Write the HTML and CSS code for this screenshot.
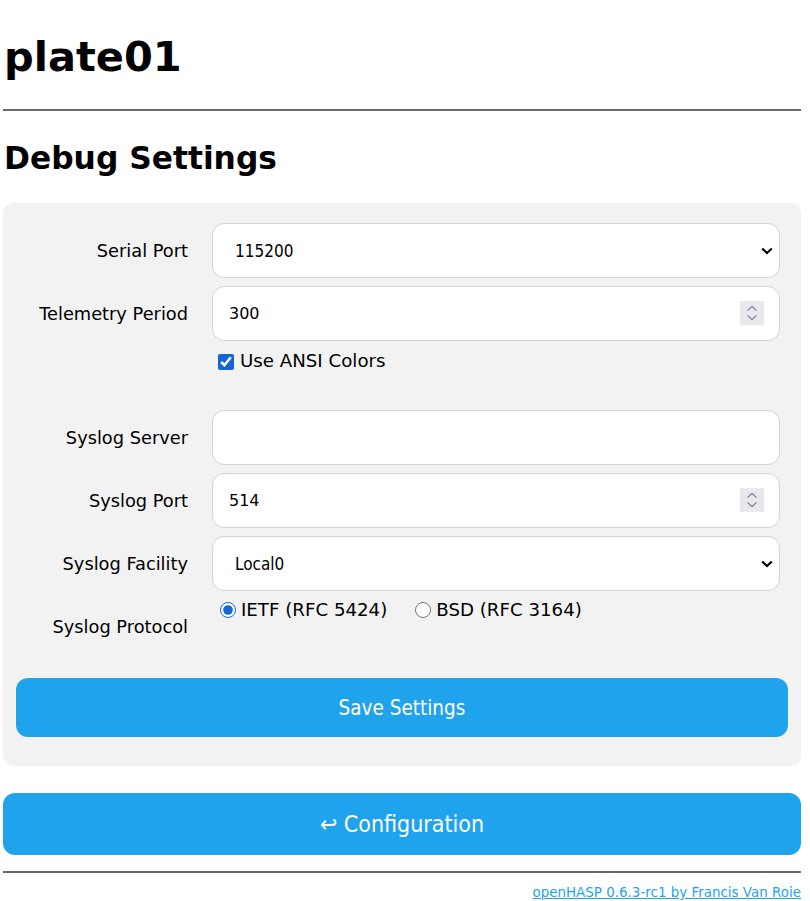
FILE: index.html
```html
<!DOCTYPE html>
<html>
<head>
<meta charset="utf-8">
<title>plate01</title>
<link rel="stylesheet" href="styles.css">
</head>
<body>
<div class="page">
  <h1 class="title">plate01</h1>
  <hr class="rule">
  <h2 class="subtitle">Debug Settings</h2>
  <form class="panel">
    <div class="row">
      <label class="lbl" for="baud">Serial Port</label>
      <div class="wrap">
        <select id="baud" class="field sel">
          <option>115200</option>
        </select>
        <svg class="chev" width="12" height="8" viewBox="0 0 12 8"><path d="M1.2 1.5 L6 6 L10.8 1.5" fill="none" stroke="#000" stroke-width="2.2"/></svg>
      </div>
    </div>
    <div class="row">
      <label class="lbl" for="tele">Telemetry Period</label>
      <div class="wrap">
        <input id="tele" class="field num" type="number" value="300">
        <span class="spin"><svg width="24" height="24" viewBox="0 0 24 24"><path d="M7.5 9.5 L12 5.5 L16.5 9.5 M7.5 14.5 L12 18.5 L16.5 14.5" fill="none" stroke="#8b8b99" stroke-width="1.4"/></svg></span>
      </div>
    </div>
    <div class="row row-check">
      <span class="lbl"></span>
      <label class="opt"><input class="chk" type="checkbox" checked>Use ANSI Colors</label>
    </div>
    <div class="row">
      <label class="lbl" for="srv">Syslog Server</label>
      <div class="wrap">
        <input id="srv" class="field" type="text" value="">
      </div>
    </div>
    <div class="row">
      <label class="lbl" for="port">Syslog Port</label>
      <div class="wrap">
        <input id="port" class="field num" type="number" value="514">
        <span class="spin"><svg width="24" height="24" viewBox="0 0 24 24"><path d="M7.5 9.5 L12 5.5 L16.5 9.5 M7.5 14.5 L12 18.5 L16.5 14.5" fill="none" stroke="#8b8b99" stroke-width="1.4"/></svg></span>
      </div>
    </div>
    <div class="row">
      <label class="lbl" for="fac">Syslog Facility</label>
      <div class="wrap">
        <select id="fac" class="field sel">
          <option>Local0</option>
        </select>
        <svg class="chev" width="12" height="8" viewBox="0 0 12 8"><path d="M1.2 1.5 L6 6 L10.8 1.5" fill="none" stroke="#000" stroke-width="2.2"/></svg>
      </div>
    </div>
    <div class="row row-radio">
      <span class="lbl">Syslog Protocol</span>
      <div class="radios">
        <label class="opt"><input class="rad" type="radio" name="proto" checked>IETF (RFC 5424)</label>
        <label class="opt"><input class="rad" type="radio" name="proto">BSD (RFC 3164)</label>
      </div>
    </div>
    <button type="button" class="btn btn-save">Save Settings</button>
  </form>
  <button type="button" class="btn btn-config">&#8617; Configuration</button>
  <hr class="rule rule-bottom">
  <div class="footer"><a href="#">openHASP 0.6.3-rc1 by Francis Van Roie</a></div>
</div>
</body>
</html>
```

FILE: styles.css
```css
html, body {
  margin: 0;
  padding: 0;
  background: #fff;
}
body {
  font-family: "DejaVu Sans", Verdana, sans-serif;
  color: #000;
}
.page {
  margin: 0 9px 0 3px;
}
.title {
  font-size: 41.5px;
  font-weight: bold;
  margin: 32px 0 0 1px;
  line-height: 49px;
}
.rule {
  border: 0;
  height: 2px;
  background: #6b6b6b;
  margin: 28px 0 0 0;
}
.subtitle {
  font-size: 31.3px;
  font-weight: bold;
  margin: 29px 0 0 1px;
  line-height: 37px;
}
.panel {
  margin-top: 26px;
  background: #f2f2f2;
  border-radius: 10px;
  padding: 20px 13px 29px 13px;
  display: flex;
  flex-direction: column;
  gap: 8px;
}
.row {
  display: grid;
  grid-template-columns: 172px 1fr;
  column-gap: 24px;
  align-items: center;
  margin-right: 8px;
  height: 55px;
}
.lbl {
  text-align: right;
  font-size: 17.8px;
}
.wrap {
  position: relative;
  height: 55px;
}
.field {
  box-sizing: border-box;
  display: block;
  height: 55px;
  width: 100%;
  margin: 0;
  border: 1px solid #d4d4d4;
  border-radius: 12px;
  background: #fff;
  padding: 0 16px;
  font-family: "DejaVu Sans", sans-serif;
  font-size: 16px;
  color: #000;
  outline: none;
}
.num {
  -moz-appearance: textfield;
}
.num::-webkit-inner-spin-button,
.num::-webkit-outer-spin-button {
  -webkit-appearance: none;
  margin: 0;
}
.sel {
  -webkit-appearance: none;
  appearance: none;
  font-family: "DejaVu Sans Condensed", "DejaVu Sans", sans-serif;
  font-stretch: condensed;
  font-size: 17px;
  padding-left: 22px;
}
.chev {
  position: absolute;
  right: 7px;
  top: 24px;
  pointer-events: none;
}
.spin {
  position: absolute;
  right: 16px;
  top: 15px;
  width: 24px;
  height: 24px;
  background: #e9e9ed;
  pointer-events: none;
}
.spin svg {
  display: block;
}
.row-check {
  height: 53px;
  align-items: start;
}
.row-radio {
  align-items: center;
}
.row-radio .radios {
  align-self: start;
  display: flex;
  gap: 28px;
}
.opt {
  display: inline-flex;
  align-items: center;
  font-size: 18.2px;
  padding-top: 1px;
  accent-color: #1565d8;
}
.radios .opt {
  padding-top: 0;
}
.chk {
  width: 16px;
  height: 16px;
  margin: 2px 6px 0 6px;
}
.rad {
  width: 16px;
  height: 16px;
  margin: 1px 5px 0 8px;
}
.radios .opt + .opt .rad {
  margin-left: 0;
}
.btn {
  display: block;
  width: 100%;
  border: 0;
  background: #1fa3ec;
  color: #fff;
  font-family: "DejaVu Sans Condensed", "DejaVu Sans", sans-serif;
  font-stretch: condensed;
  font-size: 20.5px;
  cursor: pointer;
}
.btn-save {
  margin-top: 16px;
  height: 59px;
  border-radius: 12px;
}
.btn-config {
  margin-top: 27px;
  height: 62px;
  border-radius: 12px;
  font-size: 23px;
}
.rule-bottom {
  margin-top: 16px;
}
.footer {
  text-align: right;
  font-size: 13.45px;
  margin-top: 12px;
}
.footer a {
  color: #1fa3ec;
  text-decoration: underline;
}
```
